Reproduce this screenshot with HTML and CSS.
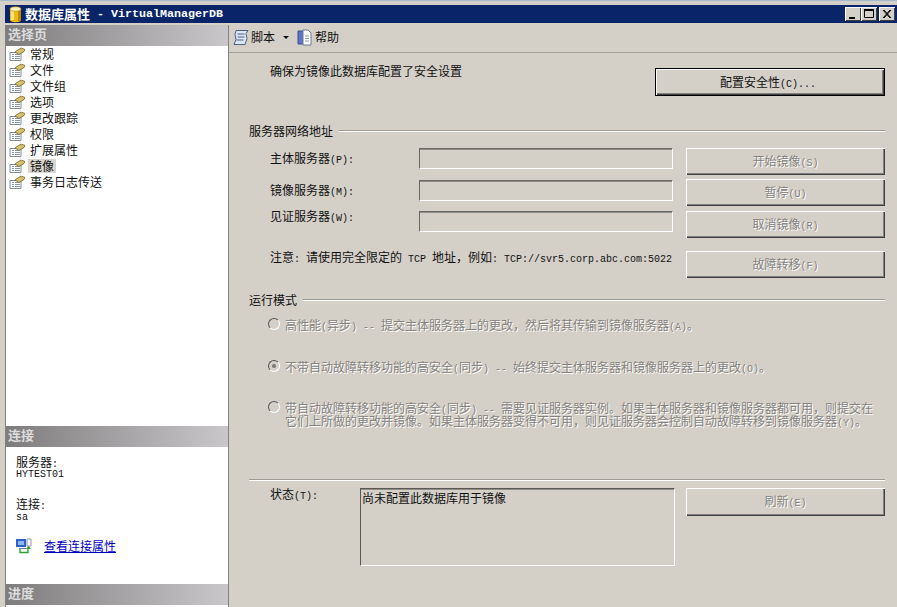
FILE: index.html
```html
<!DOCTYPE html>
<html lang="zh">
<head>
<meta charset="utf-8">
<title>数据库属性</title>
<link rel="stylesheet" href="styles.css">
</head>
<body>
<svg class="defs" width="0" height="0">
  <symbol id="page" viewBox="0 0 16 14">
    <path d="M1 5.500h11v8H1z" fill="#fff" stroke="#7f8a94"/>
    <path d="M3 7.500h2M6 7.500h5M3 9.500h2M6 9.500h5M3 11.500h2M6 11.500h5" stroke="#8a97a6"/>
    <path d="M6 5l6-4 4 1.500-1 2-5 3z" fill="#d9c065" stroke="#6e6230" stroke-width=".8"/>
  </symbol>
</svg>
<div class="window">
  <header class="titlebar">
    <svg class="dbicon" width="15" height="17" viewBox="0 0 15 17">
      <path d="M2 3v11c0 3 11 3 11 0V3z" fill="#f0b90f"/>
      <path d="M3 4v10h3V4z" fill="#fbe58a"/>
      <path d="M10 4v11h3V4z" fill="#c08a08"/>
      <ellipse cx="7.500" cy="3" rx="5.500" ry="2.300" fill="#fff2b8" stroke="#b98a10" stroke-width=".7"/>
    </svg>
    <span class="title-cjk">数据库属性</span>
    <span class="title-lat">- VirtualManagerDB</span>
    <div class="winbtns">
      <span class="winbtn"><svg width="16" height="14" viewBox="0 0 16 14"><path d="M4 10h6v2H4z" fill="#000"/></svg></span>
      <span class="winbtn"><svg width="16" height="14" viewBox="0 0 16 14"><path d="M3.500 2.500h9v8h-9z" fill="none" stroke="#000"/><path d="M3 2h10v2H3z" fill="#000"/></svg></span>
      <span class="winbtn"><svg width="16" height="14" viewBox="0 0 16 14"><path d="M4 3l7 8M5 3l7 8M11 3l-7 8M12 3l-7 8" stroke="#000" fill="none"/></svg></span>
    </div>
  </header>
  <div class="content">
    <aside class="sidebar">
      <h2 class="panelhead">选择页</h2>
      <ul class="pages">
        <li class="page"><svg class="pageicon"><use href="#page"/></svg><span>常规</span></li>
        <li class="page"><svg class="pageicon"><use href="#page"/></svg><span>文件</span></li>
        <li class="page"><svg class="pageicon"><use href="#page"/></svg><span>文件组</span></li>
        <li class="page"><svg class="pageicon"><use href="#page"/></svg><span>选项</span></li>
        <li class="page"><svg class="pageicon"><use href="#page"/></svg><span>更改跟踪</span></li>
        <li class="page"><svg class="pageicon"><use href="#page"/></svg><span>权限</span></li>
        <li class="page"><svg class="pageicon"><use href="#page"/></svg><span>扩展属性</span></li>
        <li class="page"><svg class="pageicon"><use href="#page"/></svg><span class="selected">镜像</span></li>
        <li class="page"><svg class="pageicon"><use href="#page"/></svg><span>事务日志传送</span></li>
      </ul>
      <h2 class="panelhead">连接</h2>
      <div class="conn">
        <div class="connlabel">服务器<span class="l">:</span></div>
        <div class="l connval">HYTEST01</div>
        <div class="connlabel second">连接<span class="l">:</span></div>
        <div class="l connval lower">sa</div>
        <div class="connlink">
          <svg width="17" height="16" viewBox="0 0 17 16">
            <path d="M0 1h10v8H0z" fill="#2f62c8"/><path d="M2 3h6v4H2z" fill="#8fb8ee"/>
            <path d="M11 1h4v7h-4z" fill="#fff" stroke="#8a97a6"/>
            <path d="M3 10h7v1H3z" fill="#6b7ea0"/>
            <path d="M4 11v3.500h8V11" fill="none" stroke="#2f9a2f" stroke-width="1.300"/>
            <path d="M10 11h5l-2.500-3z" fill="#2f9a2f"/>
          </svg>
          <a href="#" class="link">查看连接属性</a>
        </div>
      </div>
      <h2 class="panelhead">进度</h2>
      <div class="progress"></div>
    </aside>
    <main class="main">
      <div class="toolbar">
        <svg class="scripticon" width="18" height="17" viewBox="0 0 18 17">
          <path d="M4 1.500h12l-2 3 1 5-2 6H2l2-5-1-5z" fill="#dfe6f3" stroke="#4a5f8a"/>
          <path d="M5.500 5h7M5.500 8h7M4.500 11h7" stroke="#4a5f8a"/>
        </svg>
        <span class="tool-label">脚本</span>
        <span class="caret"></span>
        <svg class="helpicon" width="16" height="17" viewBox="0 0 16 17">
          <path d="M1 2h7v13H1z" fill="#5b76c4" stroke="#3d4f8e"/>
          <path d="M6 1h5l3 3v12H6z" fill="#fff" stroke="#6b7a99"/>
          <path d="M8 7h4M8 9.500h4M8 12h4" stroke="#8a97a6"/>
        </svg>
        <span class="tool-label">帮助</span>
      </div>
      <div class="form">
        <div class="security">
          <span class="sec-text">确保为镜像此数据库配置了安全设置</span>
          <button class="btn default">配置安全性<span class="l">(C)...</span></button>
        </div>
        <div class="grouphead net"><span>服务器网络地址</span><i class="rule"></i></div>
        <div class="netgrid">
          <label class="flabel off4">主体服务器<span class="l">(P):</span></label>
          <span class="field"></span>
          <button class="btn disabled">开始镜像<span class="l">(S)</span></button>

          <label class="flabel off5">镜像服务器<span class="l">(M):</span></label>
          <span class="field off1"></span>
          <button class="btn disabled">暂停<span class="l">(U)</span></button>

          <label class="flabel up2">见证服务器<span class="l">(W):</span></label>
          <span class="field"></span>
          <button class="btn disabled">取消镜像<span class="l">(R)</span></button>

          <div class="note">注意<span class="l">: </span>请使用完全限定的<span class="l"> TCP </span>地址，例如<span class="l">: TCP://svr5.corp.abc.com:5022</span></div>
          <button class="btn disabled">故障转移<span class="l">(F)</span></button>
        </div>
        <div class="grouphead mode"><span>运行模式</span><i class="rule"></i></div>
        <div class="radio r1"><i class="dot"></i><span class="dis">高性能<span class="l">(</span>异步<span class="l">) -- </span>提交主体服务器上的更改，然后将其传输到镜像服务器<span class="l">(A)</span>。</span></div>
        <div class="radio r2"><i class="dot on"></i><span class="dis">不带自动故障转移功能的高安全<span class="l">(</span>同步<span class="l">) -- </span>始终提交主体服务器和镜像服务器上的更改<span class="l">(O)</span>。</span></div>
        <div class="radio r3"><i class="dot"></i><span class="dis">带自动故障转移功能的高安全<span class="l">(</span>同步<span class="l">) -- </span>需要见证服务器实例。如果主体服务器和镜像服务器都可用，则提交在<br>它们上所做的更改并镜像。如果主体服务器变得不可用，则见证服务器会控制自动故障转移到镜像服务器<span class="l">(Y)</span>。</span></div>
        <i class="rule divider"></i>
        <div class="status">
          <label class="statuslabel">状态<span class="l">(T):</span></label>
          <div class="statusbox">尚未配置此数据库用于镜像</div>
          <button class="btn disabled">刷新<span class="l">(E)</span></button>
        </div>
      </div>
    </main>
  </div>
</div>
</body>
</html>
```
FILE: styles.css
```css
* { box-sizing: border-box; }
html, body { margin: 0; height: 100%; overflow: hidden; }
body {
  background: #d4d0c8;
  font: 12px/14px "Noto Sans CJK SC", sans-serif;
  color: #111;
}
.defs { position: absolute; }
.l { font-family: "Liberation Mono", monospace; font-size: 10px; line-height: 0; white-space: pre; }
.window {
  height: 607px;
  padding: 5px 0 0 5px;
  display: flex;
  flex-direction: column;
  border-top: 1px solid #a6b8cc;
}
.titlebar {
  height: 18px;
  margin-top: -1px;
  background: #0a246a;
  color: #fff;
  display: flex;
  align-items: center;
  flex: none;
  padding-left: 3px;
}
.dbicon { flex: none; margin-right: 2px; }
.title-cjk { font-size: 13px; font-weight: 700; }
.title-lat {
  font-family: "Liberation Mono", monospace;
  font-size: 11.67px;
  font-weight: 700;
  margin-left: 7px;
  white-space: pre;
}
.winbtns { margin-left: auto; display: flex; padding-right: 2px; }
.winbtn {
  width: 16px;
  height: 14px;
  background: #d4d0c8;
  display: block;
  box-shadow: inset 1px 1px 0 #fff, inset -1px -1px 0 #404040;
}
.winbtn svg { display: block; }
.winbtn:nth-child(3) { margin-left: 2px; }
.content { flex: 1; display: flex; min-height: 0; margin-top: 1px; }
.sidebar {
  width: 224px;
  flex: none;
  margin-top: 1px;
  background: #fff;
  border-left: 1px solid #808080;
  border-right: 1px solid #808080;
  display: flex;
  flex-direction: column;
}
.panelhead {
  margin: 0;
  height: 21px;
  flex: none;
  padding: 1px 0 0 2px;
  font-size: 13px;
  line-height: 15px;
  font-weight: 700;
  color: #dcdcdc;
  background: linear-gradient(90deg, #7e7c7d, #cac7ca);
}
.pages { list-style: none; margin: 0; padding: 0; height: 380px; flex: none; }
.page { height: 16px; display: flex; align-items: center; padding-left: 3px; }
.pageicon { width: 16px; height: 14px; flex: none; margin-right: 5px; }
.selected { background: #d8d5ce; padding: 0 2px; margin-left: -2px; }
.conn { height: 137px; flex: none; padding: 8px 0 0 10px; }
.connlabel { height: 14px; }
.connval { line-height: 12px; height: 12px; }
.second { margin-top: 16px; }
.lower { margin-top: 1px; }
.connlink { display: flex; align-items: center; gap: 11px; margin-top: 14px; }
.connlink svg { flex: none; }
.link { color: #0000c0; text-decoration: underline; }
.progress { flex: 1; }
.main { flex: 1; display: flex; flex-direction: column; min-width: 0; }
.toolbar {
  height: 29px;
  flex: none;
  border-bottom: 1px solid #a3a09a;
  display: flex;
  align-items: center;
  padding: 0 0 2px 3px;
}
.scripticon { margin-right: 1px; }
.caret {
  width: 0; height: 0;
  margin: 0 8px 0 8px;
  border: 3px solid transparent;
  border-top: 3px solid #111;
  border-bottom: 0;
}
.helpicon { margin-right: 2px; }
.form { padding: 15px 12px 0 20px; flex: 1; }
.security { display: flex; justify-content: space-between; height: 28px; }
.sec-text { margin: -4px 0 0 21px; }
.btn {
  font: inherit;
  padding: 0 0 2px;
  background: #d4d0c8;
  border: 0;
  color: #111;
  height: 27px;
  width: 199px;
  box-shadow: inset 1px 1px 0 #fff, inset -1px -1px 0 #404040, inset -2px -2px 0 #808080;
}
.btn.default {
  width: 230px;
  height: 28px;
  padding: 0 4px 0 0;
  border: 1px solid #000;
}
.btn.disabled { color: #85827d; text-shadow: 1px 1px 0 #fff; }
.grouphead { display: flex; align-items: center; height: 14px; gap: 6px; }
.grouphead.net { margin-top: 28px; }
.grouphead.mode { margin-top: 15px; }
.rule {
  display: block;
  flex: 1;
  height: 2px;
  background: linear-gradient(#9c9a94 50%, #fff 50%);
}
.netgrid {
  margin-top: 10px;
  margin-left: 21px;
  display: grid;
  grid-template-columns: 136px 254px 199px;
  column-gap: 13px;
  grid-template-rows: 27px 28px 36px 27px;
  row-gap: 4px;
}
.netgrid .btn { align-self: start; }
.flabel { align-self: start; }
.off4 { margin-top: 3px; }
.off5 { margin-top: 4px; }
.up2 { margin-top: -2px; }
.field {
  height: 21px;
  align-self: start;
  background: #d4d0c8;
  border: 1px solid;
  border-color: #6a6862 #fff #fff #6a6862;
  box-shadow: inset 0 1px 0 #8f8d88;
}
.off1 { margin-top: 1px; }
.note { grid-column: 1 / 3; white-space: nowrap; margin-top: -1px; }
.radio { display: flex; align-items: flex-start; gap: 5px; margin-left: 19px; line-height: 13px; white-space: nowrap; }
.r1 { margin-top: 11px; }
.r2 { margin-top: 29px; }
.r3 { margin-top: 28px; }
.dis { color: #85827d; text-shadow: 1px 1px 0 #fff; }
.dot {
  flex: none;
  width: 12px;
  height: 12px;
  border-radius: 50%;
  background: #d4d0c8;
  border: 1px solid;
  border-color: #555 #fff #fff #555;
  position: relative;
}
.dot.on::after {
  content: "";
  position: absolute;
  left: 3px;
  top: 3px;
  width: 4px;
  height: 4px;
  border-radius: 50%;
  background: #777;
}
.divider { margin-top: 52px; flex: none; }
.status { display: flex; margin-top: 7px; align-items: flex-start; }
.statuslabel { width: 90px; margin: -1px 0 0 21px; flex: none; }
.statusbox {
  width: 315px;
  height: 78px;
  flex: none;
  margin-right: 11px;
  padding: 2px 0 0 1px;
  border: 1px solid;
  border-color: #5a5852 #fff #fff #5a5852;
  box-shadow: inset 0 1px 0 #8f8d88;
}
.status .btn { height: 28px; }
```
